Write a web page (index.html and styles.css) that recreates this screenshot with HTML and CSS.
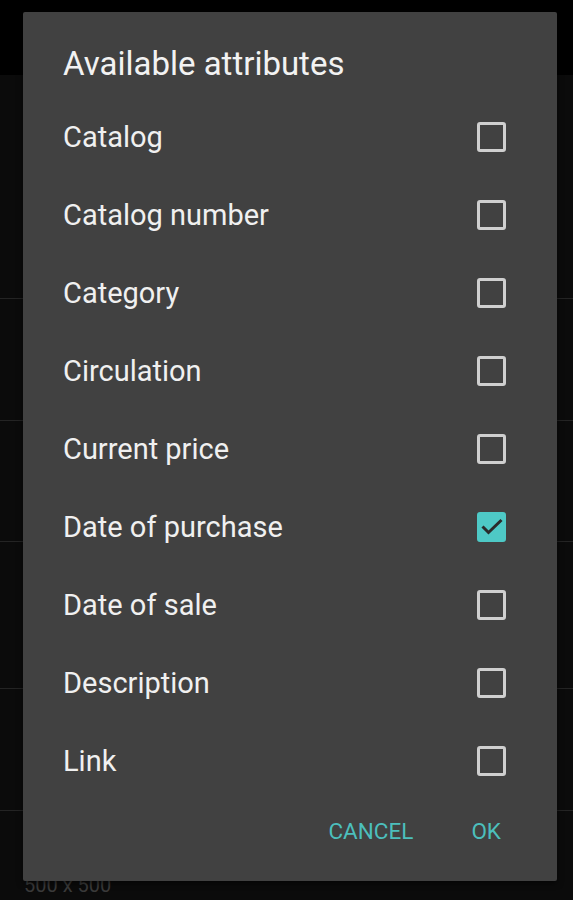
FILE: index.html
```html
<!DOCTYPE html>
<html lang="en">
<head>
    <meta charset="UTF-8">
    <meta name="viewport" content="width=device-width, initial-scale=1.0">
    <title>Available attributes</title>
    <link rel="stylesheet" href="styles.css">
</head>
<body>
    <div class="screen">
        <div class="topbar"></div>
        <div class="list">
            <div class="item" style="height: 224px"></div>
            <div class="item" style="height: 122px"></div>
            <div class="item" style="height: 121px"></div>
            <div class="item" style="height: 147px"></div>
            <div class="item" style="height: 122px"></div>
            <div class="item last">
                <span class="size">500 x 500</span>
            </div>
        </div>
    </div>

    <div class="dialog">
        <h1 class="title">Available attributes</h1>
        <ul class="options">
            <li class="option"><span>Catalog</span><span class="box"></span></li>
            <li class="option"><span>Catalog number</span><span class="box"></span></li>
            <li class="option"><span>Category</span><span class="box"></span></li>
            <li class="option"><span>Circulation</span><span class="box"></span></li>
            <li class="option"><span>Current price</span><span class="box"></span></li>
            <li class="option"><span>Date of purchase</span>
                <span class="box checked">
                    <svg viewBox="0 0 30 30" width="30" height="30">
                        <path d="M5.5 14.5 L11.5 20.5 L24.5 8" fill="none" stroke="#2b2b2b" stroke-width="3"/>
                    </svg>
                </span>
            </li>
            <li class="option"><span>Date of sale</span><span class="box"></span></li>
            <li class="option"><span>Description</span><span class="box"></span></li>
            <li class="option"><span>Link</span><span class="box"></span></li>
        </ul>
        <div class="actions">
            <button>CANCEL</button>
            <button>OK</button>
        </div>
    </div>
</body>
</html>
```

FILE: styles.css
```css
body {
    margin: 0;
    padding: 0;
    background-color: #0b0b0b;
    font-family: Roboto, "Liberation Sans", sans-serif;
    overflow: hidden;
}
.screen {
    height: 900px;
}
.topbar {
    height: 75px;
    background-color: #000;
}
.item {
    border-bottom: 1px solid #242424;
    box-sizing: border-box;
}
.item.last {
    border-bottom: none;
    padding: 62px 0 0 24px;
}
.size {
    color: #3a3a3a;
    font-size: 20px;
}

/* dialog sits over the list */
.dialog {
    position: absolute;
    top: 12px;
    left: 23px;
    width: 534px;
    height: 869px;
    background-color: #414141;
    border-radius: 2px;
    box-shadow: 0 2px 6px rgba(0, 0, 0, 0.6);
    box-sizing: border-box;
    padding: 0 51px 0 40px;
    display: flex;
    flex-direction: column;
}
.title {
    margin: 0;
    height: 86px;
    box-sizing: border-box;
    padding-top: 17px;
    display: flex;
    align-items: center;
    font-size: 33px;
    font-weight: normal;
    color: #f2f2f2;
}
.options {
    list-style: none;
    margin: 0;
    padding: 0;
}
.option {
    height: 78px;
    display: flex;
    align-items: center;
    justify-content: space-between;
    font-size: 29px;
    color: #f0f0f0;
}
.box {
    width: 29px;
    height: 30px;
    border: 3px solid #cfcfcf;
    border-radius: 3px;
    box-sizing: border-box;
    display: flex;
    align-items: center;
    justify-content: center;
    overflow: hidden;
}
.box.checked {
    background-color: #4ec9c6;
    border-color: #4ec9c6;
}
.box svg {
    flex: none;
}
.actions {
    flex: 1;
    display: flex;
    justify-content: flex-end;
    align-items: flex-start;
    padding-top: 18px;
    gap: 58px;
    padding-right: 5px;
}
button {
    background: none;
    border: none;
    padding: 0;
    font-family: Roboto, "Liberation Sans", sans-serif;
    font-size: 22.5px;
    color: #4cbfbc;
    cursor: pointer;
}
```
